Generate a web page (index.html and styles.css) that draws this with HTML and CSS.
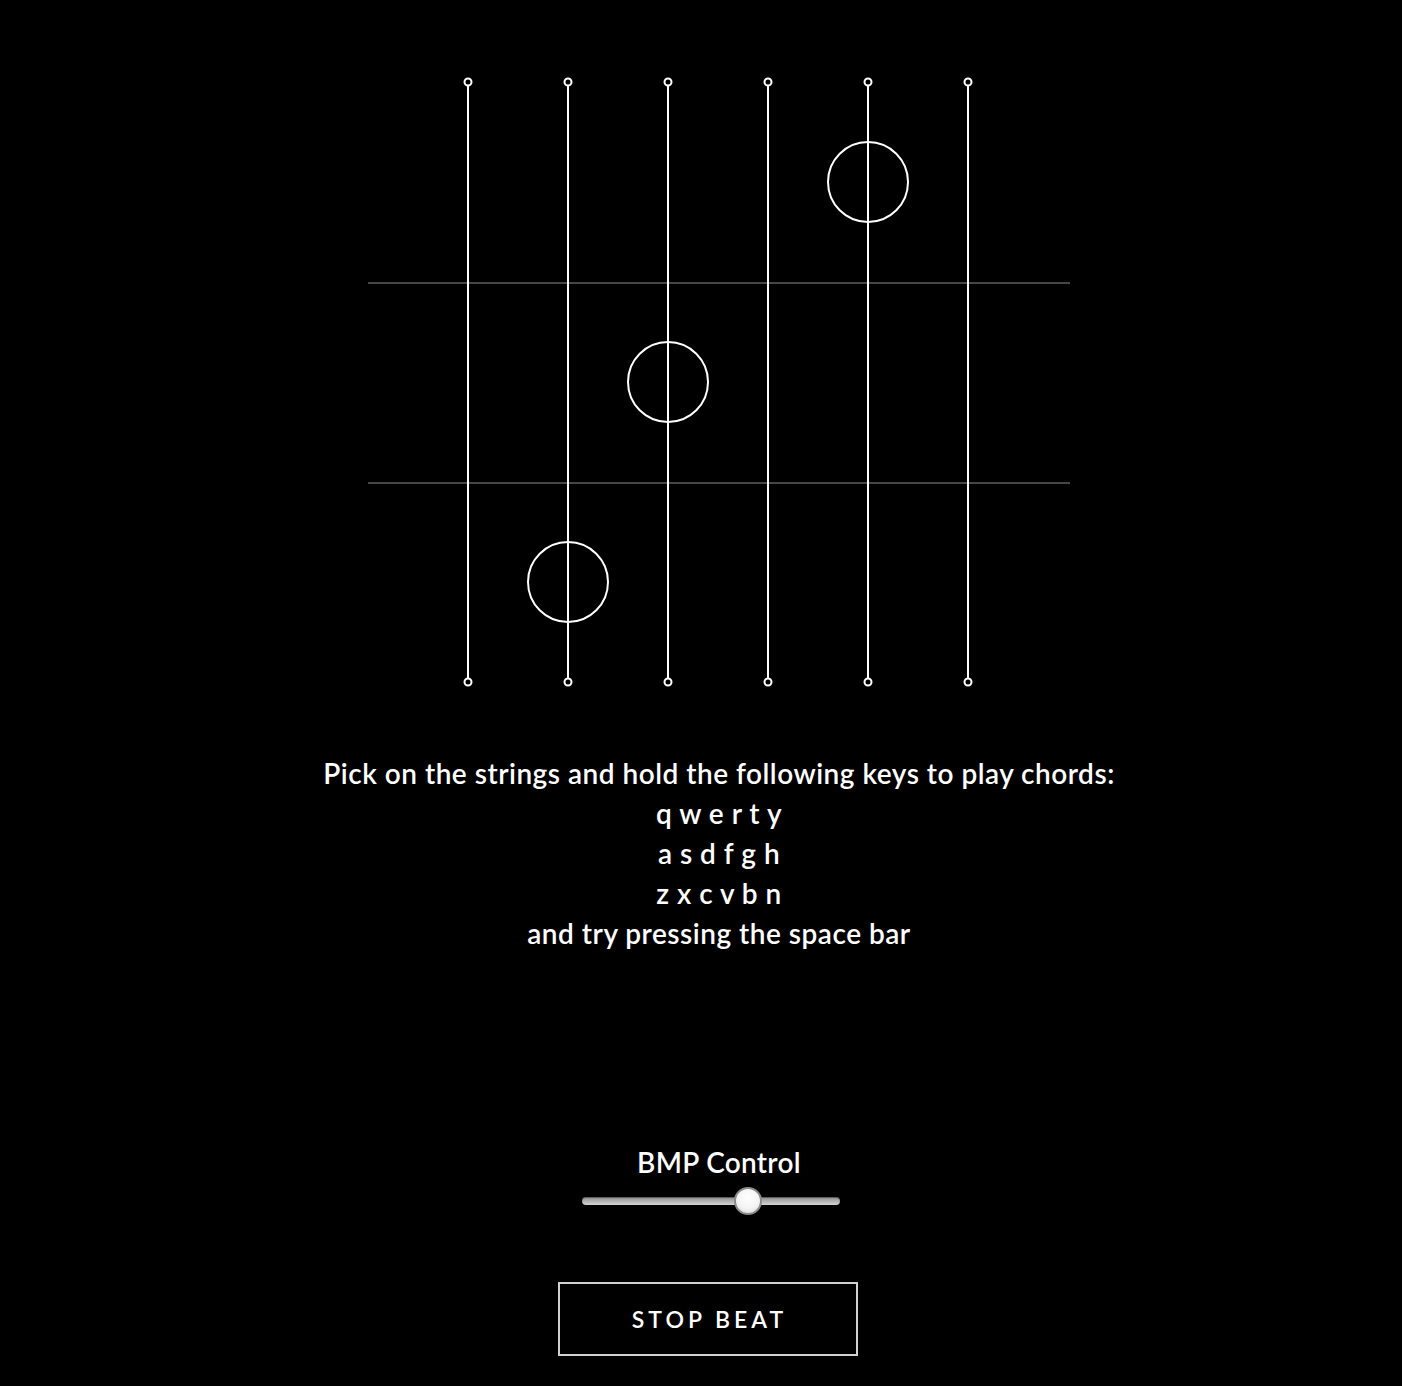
FILE: index.html
```html
<!DOCTYPE html>
<html lang="en">
<head>
<meta charset="utf-8">
<title>Chords</title>
<link rel="stylesheet" href="styles.css">
</head>
<body>
<main class="page">
  <svg class="board" width="702" height="700" viewBox="0 0 702 700">
    <g class="frets">
      <line x1="0" y1="283" x2="702" y2="283"/>
      <line x1="0" y1="483" x2="702" y2="483"/>
    </g>
    <g class="strings">
      <line x1="100" y1="82" x2="100" y2="682"/>
      <line x1="200" y1="82" x2="200" y2="682"/>
      <line x1="300" y1="82" x2="300" y2="682"/>
      <line x1="400" y1="82" x2="400" y2="682"/>
      <line x1="500" y1="82" x2="500" y2="682"/>
      <line x1="600" y1="82" x2="600" y2="682"/>
    </g>
    <g class="pegs">
      <circle cx="100" cy="82" r="3.5"/><circle cx="200" cy="82" r="3.5"/><circle cx="300" cy="82" r="3.5"/>
      <circle cx="400" cy="82" r="3.5"/><circle cx="500" cy="82" r="3.5"/><circle cx="600" cy="82" r="3.5"/>
      <circle cx="100" cy="682" r="3.5"/><circle cx="200" cy="682" r="3.5"/><circle cx="300" cy="682" r="3.5"/>
      <circle cx="400" cy="682" r="3.5"/><circle cx="500" cy="682" r="3.5"/><circle cx="600" cy="682" r="3.5"/>
    </g>
    <g class="notes">
      <circle cx="500" cy="182" r="40"/>
      <circle cx="300" cy="382" r="40"/>
      <circle cx="200" cy="582" r="40"/>
    </g>
  </svg>

  <div class="help">
    <p>Pick on the strings and hold the following keys to play chords:</p>
    <p class="keys">q w e r t y</p>
    <p class="keys">a s d f g h</p>
    <p class="keys">z x c v b n</p>
    <p>and try pressing the space bar</p>
  </div>

  <label class="bpm-label" for="bpm">BMP Control</label>
  <input class="bpm" id="bpm" type="range" min="0" max="100" value="66">

  <button class="beat" type="button">STOP BEAT</button>
</main>
</body>
</html>
```

FILE: styles.css
```css
html, body {
  margin: 0;
  background: #000;
}

body {
  color: #fff;
  font-family: "Lato", "Noto Sans", sans-serif;
}

.page {
  display: flex;
  flex-direction: column;
  align-items: center;
  padding-left: 36px;
  padding-bottom: 40px;
}

.board {
  display: block;
}

.frets line {
  stroke: #5e5e5e;
  stroke-width: 1.5;
}

.strings line {
  stroke: #fff;
  stroke-width: 2;
}

.pegs circle {
  fill: #000;
  stroke: #fff;
  stroke-width: 2;
}

.notes circle {
  fill: none;
  stroke: #fff;
  stroke-width: 2;
}

.help {
  margin-top: 53px;
  text-align: center;
  font-size: 28px;
  font-weight: 600;
  line-height: 40px;
  letter-spacing: 0.5px;
}

.help p {
  margin: 0;
}

.bpm-label {
  margin-top: 189px;
  font-size: 28px;
  font-weight: 600;
  line-height: 40px;
  letter-spacing: 0.3px;
}

.bpm {
  -webkit-appearance: none;
  appearance: none;
  width: 258px;
  height: 28px;
  margin: 5px 16px 0 0;
  background: transparent;
}

.bpm::-webkit-slider-runnable-track {
  height: 8px;
  border-radius: 4px;
  background: linear-gradient(#8f8f8f, #d4d4d4);
  box-shadow: inset 0 1px 1px rgba(0,0,0,0.4);
}

.bpm::-webkit-slider-thumb {
  -webkit-appearance: none;
  box-sizing: border-box;
  width: 28px;
  height: 28px;
  margin-top: -10px;
  border-radius: 50%;
  border: 2px solid #8c8c8c;
  background: radial-gradient(circle at 50% 35%, #ffffff 0%, #f4f4f4 55%, #d6d6d6 100%);
}

.beat {
  margin: 67px 23px 0 0;
  width: 300px;
  height: 74px;
  background: #000;
  color: #fff;
  border: 2px solid #d0d0d0;
  font-family: "Lato", "Noto Sans", sans-serif;
  font-size: 23px;
  font-weight: 600;
  letter-spacing: 4px;
  padding: 0 0 0 4px;
}
```
